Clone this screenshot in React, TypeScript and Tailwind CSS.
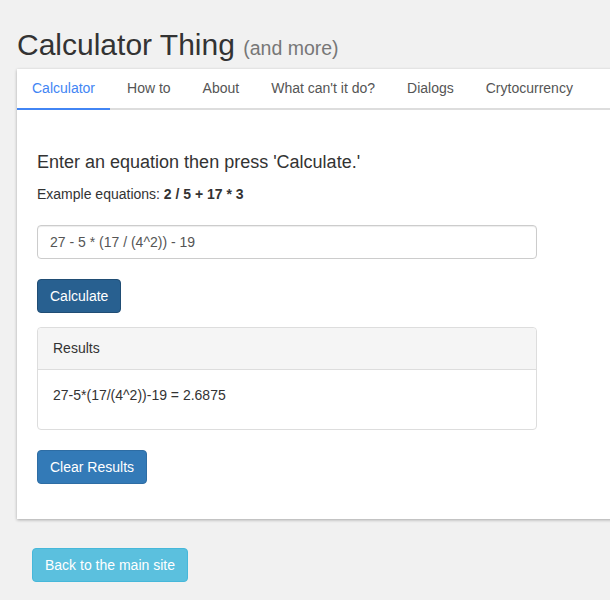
import React from "react";

const tabs = ["Calculator", "How to", "About", "What can't it do?", "Dialogs", "Crytocurrency"];

export default function App() {
  return (
    <div className="min-h-[600px] w-[610px] overflow-hidden bg-[#f1f1f1] text-[14px] text-[#333]" style={{ fontFamily: '"Liberation Sans", Arial, sans-serif' }}>
      <div className="pl-[17px] pt-[28px]">
        <h1 className="mb-[8px] text-[30px] leading-[33px] text-[#333]">
          Calculator Thing <small className="text-[19.5px] leading-[20px] text-[#777]">(and more)</small>
        </h1>
        <div className="w-[640px] bg-white shadow-[0_1px_3px_rgba(0,0,0,0.3)]">
          <ul className="flex border-b-2 border-[#ddd]">
            {tabs.map((t, i) => (
              <li
                key={t}
                className={
                  i === 0
                    ? "-mb-[2px] mr-[2px] border-b-2 border-[#4285f4] px-[15px] py-[10px] leading-[19px] text-[#4285f4]"
                    : "mr-[2px] px-[15px] py-[10px] leading-[19px] text-[#555]"
                }
              >
                {t}
              </li>
            ))}
          </ul>
          <div className="w-[540px] px-[20px] pt-[42px] pb-[35px]">
            <h4 className="text-[18px] leading-[20px]">Enter an equation then press 'Calculate.'</h4>
            <p className="mt-[12px] leading-[20px]">
              Example equations: <b>2 / 5 + 17 * 3</b>
            </p>
            <input
              className="mt-[21px] block h-[34px] w-[500px] rounded-[4px] border border-[#ccc] px-[12px] text-[14px] text-[#555] outline-none shadow-[inset_0_1px_1px_rgba(0,0,0,0.075)]"
              defaultValue="27 - 5 * (17 / (4^2)) - 19"
              style={{ fontFamily: '"Liberation Sans", Arial, sans-serif' }}
            />
            <button className="mt-[20px] block rounded-[4px] border border-[#204d74] bg-[#286090] px-[12px] py-[6px] leading-[20px] text-white">
              Calculate
            </button>
            <div className="mt-[14px] w-[500px] rounded-[4px] border border-[#ddd]">
              <div className="rounded-t-[4px] border-b border-[#ddd] bg-[#f5f5f5] px-[15px] py-[10px] leading-[21px]">Results</div>
              <div className="px-[15px] pt-[15px] pb-[24px] leading-[20px]">27-5*(17/(4^2))-19 = 2.6875</div>
            </div>
            <button className="mt-[20px] block rounded-[4px] border border-[#2e6da4] bg-[#337ab7] px-[12px] py-[6px] leading-[20px] text-white">
              Clear Results
            </button>
          </div>
        </div>
      </div>
      <div className="pl-[32px] pt-[29px]">
        <button className="rounded-[4px] border border-[#46b8da] bg-[#5bc0de] px-[12px] py-[6px] leading-[20px] text-white">
          Back to the main site
        </button>
      </div>
    </div>
  );
}
